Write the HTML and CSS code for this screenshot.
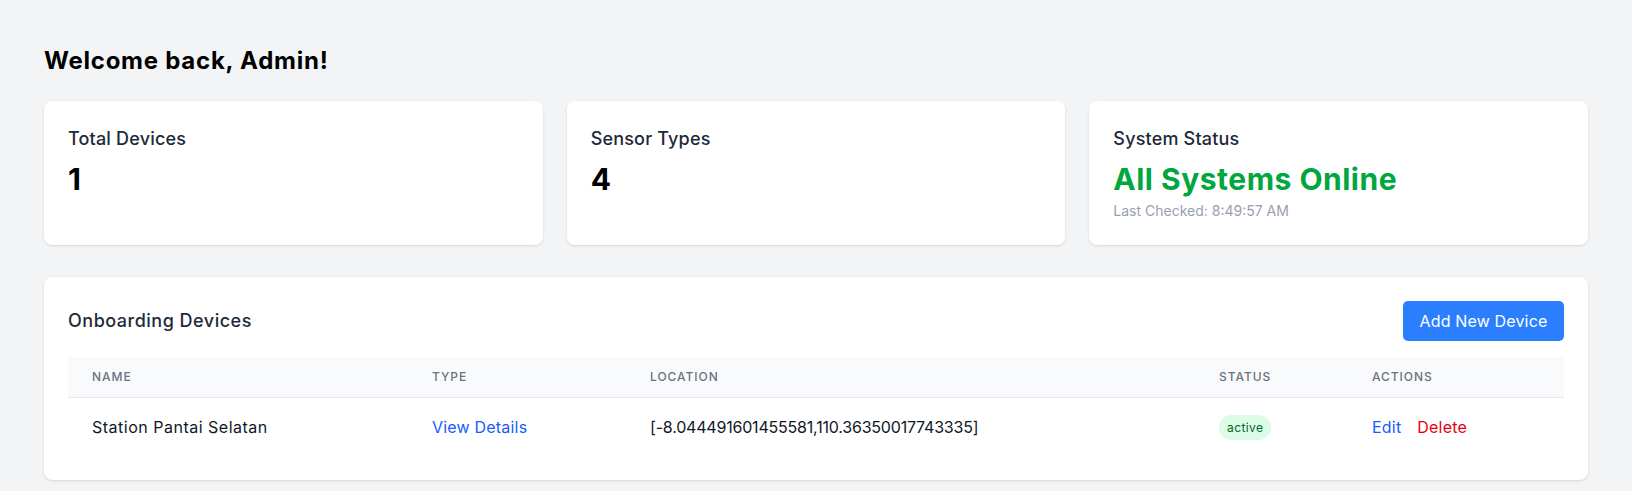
FILE: index.html
```html
<!DOCTYPE html>
<html lang="en">
<head>
<meta charset="utf-8">
<title>Dashboard</title>
<link rel="stylesheet" href="styles.css">
</head>
<body>
<main class="page">
  <h1 class="welcome">Welcome back, Admin!</h1>

  <section class="stats">
    <div class="card stat">
      <h2 class="stat-title">Total Devices</h2>
      <p class="stat-value">1</p>
    </div>
    <div class="card stat">
      <h2 class="stat-title">Sensor Types</h2>
      <p class="stat-value">4</p>
    </div>
    <div class="card stat">
      <h2 class="stat-title">System Status</h2>
      <p class="stat-value stat-ok">All Systems Online</p>
      <p class="stat-note">Last Checked: 8:49:57 AM</p>
    </div>
  </section>

  <section class="card devices">
    <div class="devices-head">
      <h2 class="devices-title">Onboarding Devices</h2>
      <button class="btn-primary" type="button">Add New Device</button>
    </div>
    <table class="table">
      <colgroup>
        <col class="c-name"><col class="c-type"><col class="c-loc"><col class="c-status"><col class="c-actions">
      </colgroup>
      <thead>
        <tr>
          <th>Name</th>
          <th>Type</th>
          <th>Location</th>
          <th>Status</th>
          <th>Actions</th>
        </tr>
      </thead>
      <tbody>
        <tr>
          <td class="cell-name">Station Pantai Selatan</td>
          <td><a class="link" href="#">View Details</a></td>
          <td class="cell-loc">[-8.044491601455581,110.36350017743335]</td>
          <td><span class="badge">active</span></td>
          <td><a class="link edit" href="#">Edit</a><a class="link danger" href="#">Delete</a></td>
        </tr>
      </tbody>
    </table>
  </section>
</main>
</body>
</html>
```
FILE: styles.css
```css
* { box-sizing: border-box; }

html, body {
  margin: 0;
  padding: 0;
  background: #f3f4f6;
}

body {
  font-family: Inter, "Noto Sans", sans-serif;
  color: #101828;
  -webkit-font-smoothing: antialiased;
}

.page {
  padding: 45px 44px 12px;
}

.welcome {
  margin: 0 0 24px;
  font-size: 24px;
  line-height: 32px;
  font-weight: 700;
  color: #000;
  letter-spacing: 0.75px;
}

.stats {
  display: grid;
  grid-template-columns: repeat(3, 1fr);
  gap: 24px;
  margin-bottom: 32px;
}

.card {
  background: #fff;
  border-radius: 8px;
  box-shadow: 0 1px 3px rgba(0, 0, 0, 0.1), 0 1px 2px -1px rgba(0, 0, 0, 0.1);
}

.stat {
  padding: 24px;
  min-height: 144px;
}

.stat-title {
  margin: 0;
  font-size: 18px;
  line-height: 28px;
  font-weight: 500;
  color: #1e2939;
  letter-spacing: 0.18px;
}

.stat-value {
  margin: 8px 0 0;
  font-size: 30px;
  line-height: 36px;
  font-weight: 700;
  color: #000;
}

.stat-ok {
  color: #00a63e;
  letter-spacing: 0.5px;
}

.stat-note {
  margin: 4px 0 0;
  font-size: 14px;
  line-height: 20px;
  color: #99a1af;
}

.devices {
  padding: 24px;
}

.devices-head {
  display: flex;
  align-items: center;
  justify-content: space-between;
  margin-bottom: 16px;
}

.devices-title {
  margin: 0;
  font-size: 18px;
  line-height: 28px;
  font-weight: 500;
  color: #1e2939;
  letter-spacing: 0.5px;
}

.btn-primary {
  font: inherit;
  font-size: 16px;
  line-height: 24px;
  padding: 8px 16px;
  width: 161px;
  border: 0;
  border-radius: 5px;
  background: #2b7fff;
  color: #fff;
  letter-spacing: 0.15px;
  cursor: pointer;
}

.table {
  width: 100%;
  border-collapse: collapse;
  table-layout: fixed;
}

.c-name { width: 340px; }
.c-type { width: 218px; }
.c-loc { width: 569px; }
.c-status { width: 153px; }
.c-actions { width: 216px; }

.table thead tr {
  background: #f9fafb;
  border-bottom: 1px solid #e5e7eb;
}

.table th {
  padding: 12px 24px;
  text-align: left;
  font-size: 12px;
  line-height: 16px;
  font-weight: 500;
  color: #6a7282;
  text-transform: uppercase;
  letter-spacing: 0.08em;
}

.table td {
  padding: 16px 24px;
  font-size: 16px;
  line-height: 24px;
  color: #101828;
  white-space: nowrap;
  letter-spacing: 0.2px;
}

.table td.cell-name { letter-spacing: 0.5px; }
.table td.cell-loc { letter-spacing: -0.2px; }

.link {
  color: #155dfc;
  text-decoration: none;
}

.link.edit { margin-right: 16px; }
.link.danger { color: #e7000b; }

.badge {
  display: inline-block;
  padding: 4px 8px;
  font-size: 12px;
  line-height: 17px;
  font-weight: 400;
  color: #016630;
  background: #dcfce7;
  border-radius: 9999px;
  letter-spacing: 0.4px;
  vertical-align: middle;
}
```
